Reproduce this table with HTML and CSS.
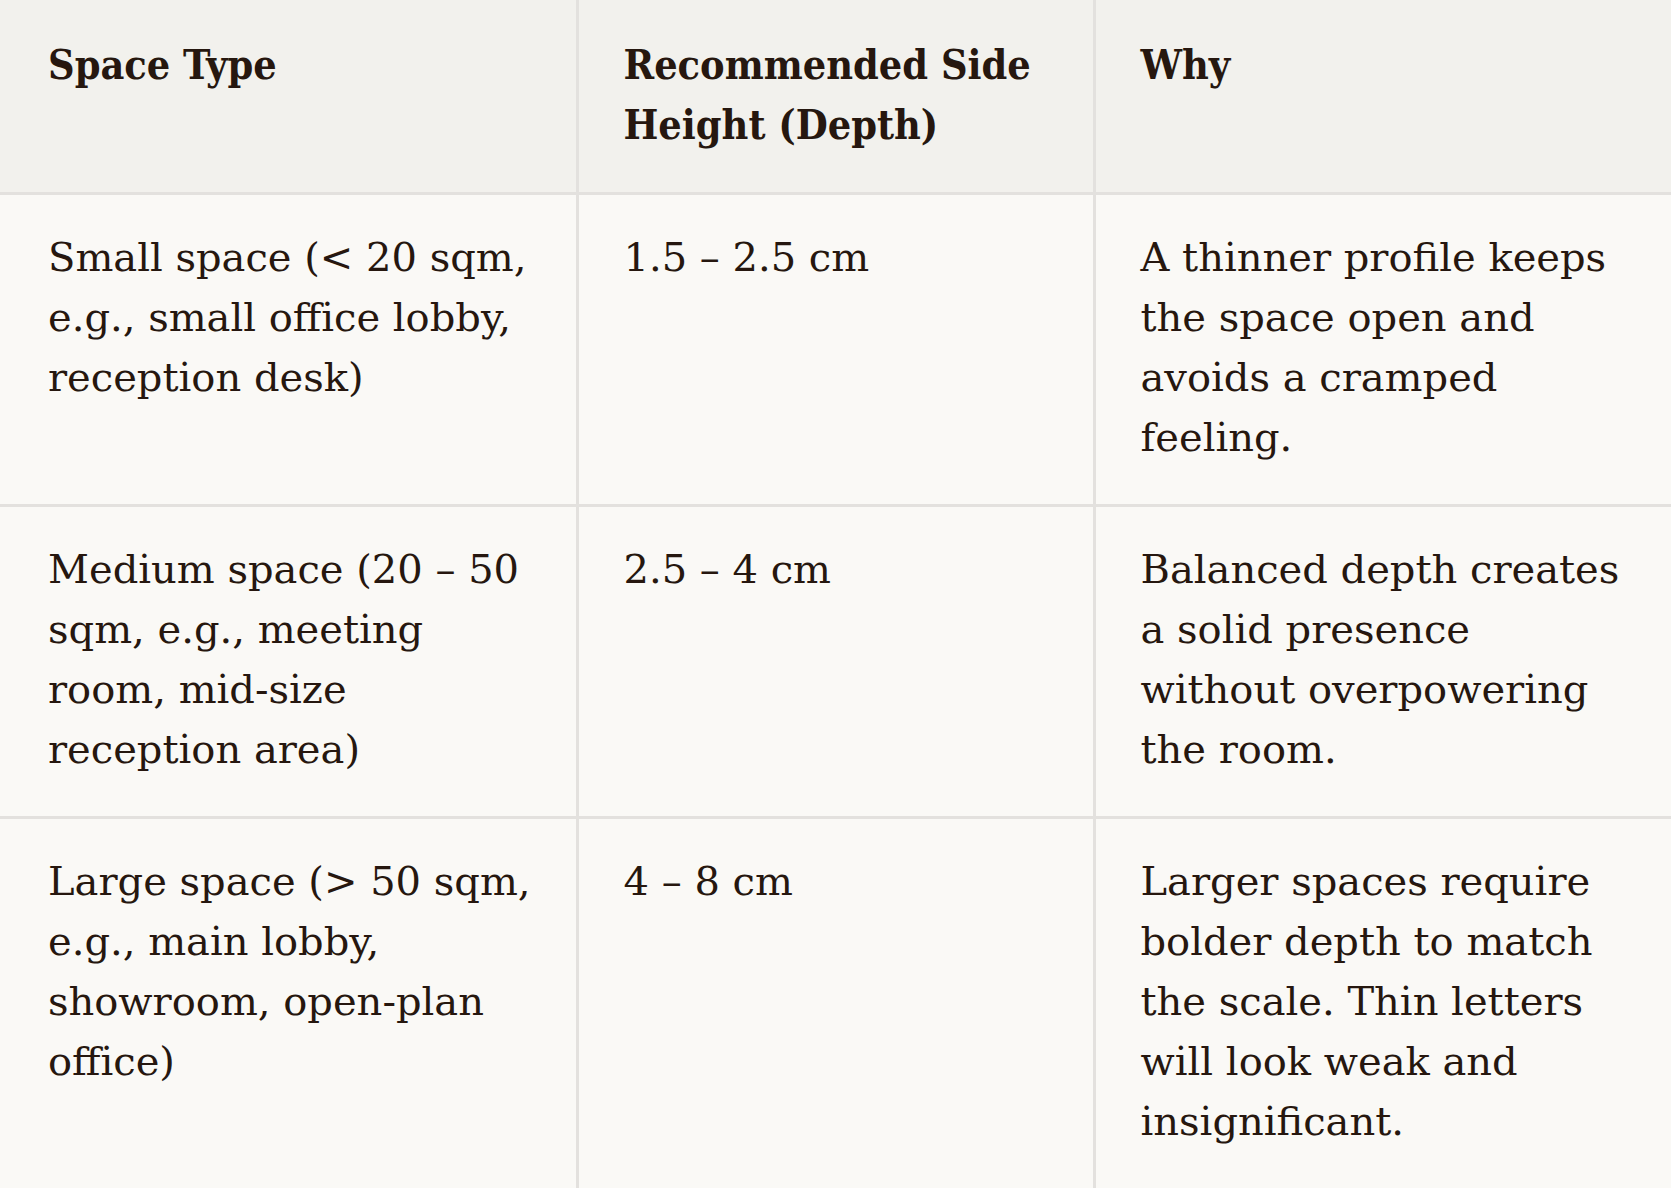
FILE: index.html
```html
<!DOCTYPE html>
<html lang="en">
<head>
<meta charset="utf-8">
<title>Side Height Recommendations</title>
<link rel="stylesheet" href="styles.css">
</head>
<body>
<table class="spec-table">
  <colgroup>
    <col class="col-type">
    <col class="col-height">
    <col class="col-why">
  </colgroup>
  <thead>
    <tr>
      <th>Space Type</th>
      <th>Recommended Side Height (Depth)</th>
      <th>Why</th>
    </tr>
  </thead>
  <tbody>
    <tr>
      <td>Small space (&lt; 20 sqm, e.g., small office lobby, reception desk)</td>
      <td>1.5 – 2.5 cm</td>
      <td>A thinner profile keeps the space open and avoids a cramped feeling.</td>
    </tr>
    <tr>
      <td>Medium space (20 – 50 sqm, e.g., meeting room, mid-size reception area)</td>
      <td>2.5 – 4 cm</td>
      <td>Balanced depth creates a solid presence without overpowering the room.</td>
    </tr>
    <tr>
      <td>Large space (&gt; 50 sqm, e.g., main lobby, showroom, open-plan office)</td>
      <td>4 – 8 cm</td>
      <td>Larger spaces require bolder depth to match the scale. Thin letters will look weak and insignificant.</td>
    </tr>
  </tbody>
</table>
</body>
</html>
```
FILE: styles.css
```css
html, body {
  margin: 0;
  padding: 0;
  background: #faf9f6;
}

.spec-table {
  width: 100%;
  border-collapse: collapse;
  table-layout: fixed;
  font-family: "DejaVu Serif", "Liberation Serif", serif;
  font-size: 40px;
  line-height: 60px;
  color: #26170f;
}

.col-type { width: 577px; }
.col-height { width: 517px; }

.spec-table th,
.spec-table td {
  border: 3px solid #e3e1de;
  padding: 32px 44px 37px 45px;
  text-align: left;
  vertical-align: top;
}

.spec-table th {
  background: #f2f1ed;
  font-family: "DejaVu Serif Condensed", "DejaVu Serif", serif;
  font-size: 41px;
  font-weight: 700;
  padding-top: 35px;
  padding-bottom: 37px;
  border-top: none;
}

.spec-table td {
  background: #faf9f6;
}

.spec-table tr > :first-child {
  border-left: none;
  padding-left: 48px;
}
.spec-table tr > :last-child { border-right: none; }
.spec-table tbody tr:last-child td {
  border-bottom: none;
  padding-bottom: 48px;
}
```
